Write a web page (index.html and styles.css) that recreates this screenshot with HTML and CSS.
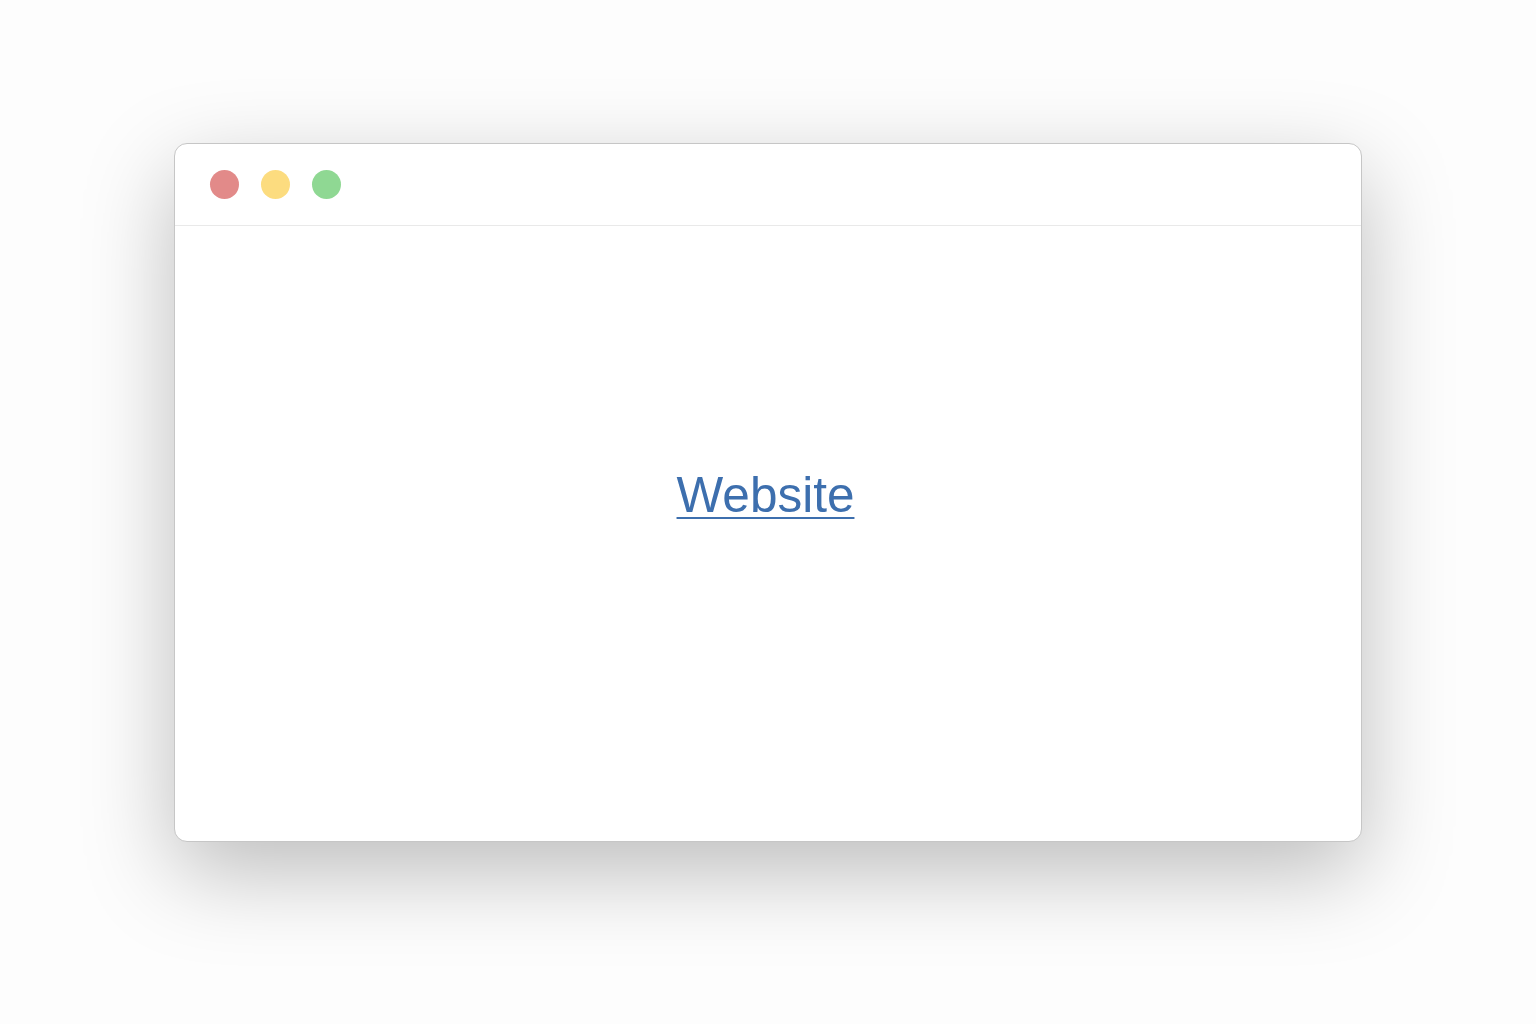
FILE: index.html
```html
<html>
	<head>
		<title>Website</title>
		<link rel="stylesheet" href="styles.css">
	</head>
	<body>
		<div class="window">
			<div class="titlebar">
				<span class="dot red"></span>
				<span class="dot yellow"></span>
				<span class="dot green"></span>
			</div>
			<div class="content">
				<a href="#" class="site">Website</a>
			</div>
		</div>
	</body>
</html>
```

FILE: styles.css
```css
body { margin: 0; background: #fdfdfd; 
	font-family: "Liberation Sans", Arial, sans-serif;
	padding-top: 143px;
}

.window { width: 1186px; height: 697px; margin: 0 auto;
	background: #fff; border: 1px solid #c6c6c6; border-radius: 13px;
	box-shadow: 0 30px 90px rgba(0,0,0,0.26);
	display: flex; flex-direction: column; overflow: hidden;
}

.titlebar { height: 81px; border-bottom: 1px solid #e9e9e9;
	display: flex; align-items: center; gap: 22px; padding-left: 35px;
}

.dot { width: 29px; height: 29px; border-radius: 50%; display: block; }
.red { background: #e28a89; }
.yellow { background: #fcdc7f; }
.green { background: #8fd893; }

.content { flex: 1; display: flex; justify-content: center;
	padding-top: 241px; padding-right: 5px; }

a.site { color: #3d6fae; font-size: 49.5px; line-height: 56px; height: 56px;
	text-decoration-thickness: 2px; text-underline-offset: 5px; }
```
